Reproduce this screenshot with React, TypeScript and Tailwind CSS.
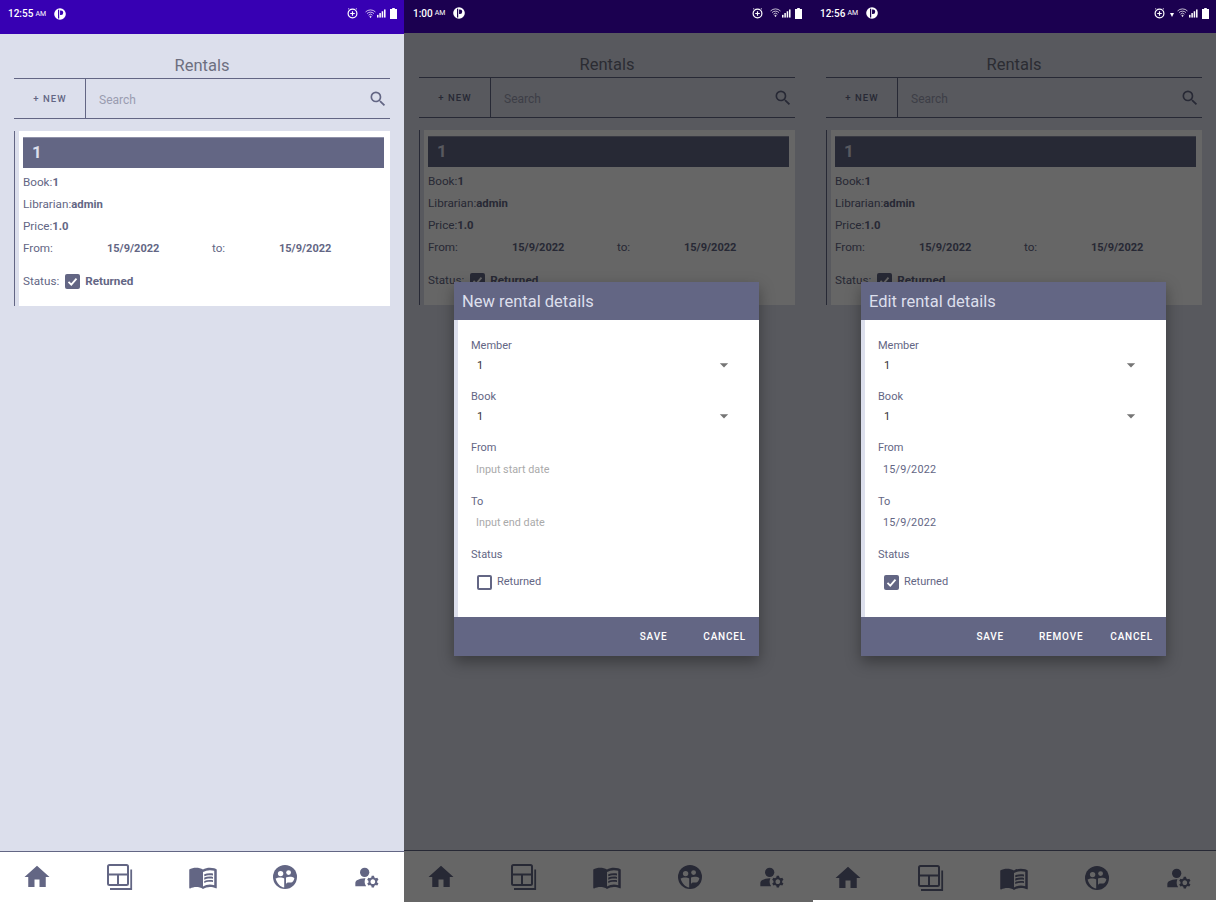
import { ReactNode } from 'react';
import { MdArrowDropDown, MdHome, MdManageAccounts, MdMenuBook, MdSearch } from 'react-icons/md';

const ink = 'text-[#636684]';

const PIcon = ({ color }: { color: string }) => (
  <svg width="12" height="12" viewBox="0 0 13 13">
    <circle cx="6.5" cy="6.5" r="6.3" fill="white" />
    <path d="M5 2v9.4" stroke={color} strokeWidth="1.3" />
    <path d="M6.6 2.8h1a2.4 2.4 0 0 1 0 4.8h-1z" fill={color} />
  </svg>
);

const StatusIcons = ({ arrow }: { arrow?: boolean }) => (
  <div className="flex items-center">
    <svg width="11" height="11" viewBox="0 0 11 11" fill="none" stroke="white">
      <circle cx="5.5" cy="5.5" r="4.4" strokeWidth="1.2" />
      <path d="M5.5 3.2v4.6M3.2 5.5h4.6" strokeWidth="1.2" />
      <path d="M1 1.2l1.2-.8M10 1.2l-1.2-.8" strokeWidth="0.8" />
    </svg>
    {arrow ? (
      <svg className="ml-1 mr-[2px]" width="6" height="11" viewBox="0 0 6 11">
        <path d="M1 5h4L3 9z" fill="white" />
      </svg>
    ) : (
      <div className="w-[7px]" />
    )}
    <svg width="11" height="10" viewBox="0 0 12 10" fill="none" stroke="white" strokeWidth="0.8">
      <path d="M.6 2.8a7.6 7.6 0 0 1 10.8 0" />
      <path d="M2.2 4.6a5.3 5.3 0 0 1 7.6 0" />
      <path d="M3.8 6.3a3 3 0 0 1 4.4 0" />
      <path d="M5.2 7.9a1.2 1.2 0 0 1 1.6 0L6 8.9z" fill="white" />
    </svg>
    <svg className="ml-px" width="9" height="9" viewBox="0 0 10 9" fill="white">
      <rect x="0" y="6" width="1.7" height="3" />
      <rect x="2.6" y="4" width="1.7" height="5" />
      <rect x="5.2" y="2" width="1.7" height="7" />
      <rect x="7.8" y="0" width="1.7" height="9" />
    </svg>
    <svg className="ml-1" width="7" height="11" viewBox="0 0 7 11" fill="white">
      <path d="M2.2 0h2.6v1H7v10H0V1h2.2z" />
    </svg>
  </div>
);

const MosaicIcon = () => (
  <svg className="-ml-px mr-px" width="28" height="28" viewBox="0 0 28 28" fill="none" stroke="#636684" strokeWidth="2">
    <rect x="3" y="2" width="20" height="20" rx="1.5" />
    <path d="M3 11.5h20M13 11.5V22" />
    <path d="M5 26h21.2V6.5" strokeWidth="1.8" />
  </svg>
);

const GroupCircleIcon = () => (
  <svg width="28" height="28" viewBox="0 0 28 28">
    <circle cx="14" cy="14" r="12" fill="#636684" />
    <circle cx="9.6" cy="10.6" r="2.7" fill="white" />
    <circle cx="17.6" cy="9.6" r="2.4" fill="white" />
    <path d="M4.6 15.6c1.8-1.4 6.4-1.7 8.6-.2v9.2c-4-.5-7.4-4.4-8.6-9z" fill="white" />
    <path d="M15 14.6c2.5-1.2 6.4-1 8.4.6-.6 2.6-1.8 4.2-3.4 4.2h-3c-1.4 0-2 1-2 2.4z" fill="white" />
  </svg>
);

const Checkbox = ({ checked }: { checked: boolean }) =>
  checked ? (
    <div className="flex h-[15px] w-[15px] items-center justify-center rounded-[2px] bg-[#636684]">
      <svg width="11" height="11" viewBox="0 0 11 11" fill="none" stroke="white" strokeWidth="1.8">
        <path d="M1.5 5.8l2.8 2.8 5.2-6" />
      </svg>
    </div>
  ) : (
    <div className="h-[15px] w-[15px] rounded-[2px] border-2 border-[#636684]" />
  );

const Line = ({ label, value }: { label: string; value: string }) => (
  <div className="flex h-[22px] items-center text-[11.7px]">
    {label}:<b className="text-[11.3px] font-bold">{value}</b>
  </div>
);

const Rentals = () => (
  <div className={`flex flex-col ${ink}`}>
    <div className="pt-[22px] text-center text-[16.5px] leading-[20px] text-[#6d6f80]">Rentals</div>
    <div className="mt-[2px] flex h-[41px] border-y border-[#636684]">
      <div className="flex w-[72px] items-center justify-center border-r border-[#636684] pl-px pt-px text-[9.5px] font-medium tracking-[1.1px]">
        + NEW
      </div>
      <div className="flex flex-1 items-center justify-between pl-[13px] pr-[2px]">
        <span className="mt-[2px] text-xs text-[#9a9cb0]">Search</span>
        <MdSearch size={20} />
      </div>
    </div>
    <div className="mt-3 h-[175px] border-l border-[#636684] pl-1">
      <div className="h-full bg-white px-1 pr-[6px] pt-[6px]">
        <div className="flex h-[31px] items-center border-t border-[#8f91a8] bg-[#636684] pl-[9px] text-[17px] font-bold text-[#dcdfec]">1</div>
        <div className="pt-1">
          <Line label="Book" value="1" />
          <Line label="Librarian" value="admin" />
          <Line label="Price" value="1.0" />
          <div className="flex h-[22px] items-center text-[11.7px]">
            <span className="w-[84px]">From:</span>
            <b className="w-[105px] text-[11px] font-bold">15/9/2022</b>
            <span className="w-[67px]">to:</span>
            <b className="text-[11px] font-bold">15/9/2022</b>
          </div>
          <div className="mt-[11px] flex h-[22px] items-center text-[11.7px]">
            <span>Status:</span>
            <div className="-mt-px ml-[6px]">
              <Checkbox checked />
            </div>
            <b className="ml-[5px] font-bold">Returned</b>
          </div>
        </div>
      </div>
    </div>
  </div>
);

const BottomNav = ({ className }: { className: string }) => (
  <div className={`flex shrink-0 items-center justify-between border-t border-[#636684] bg-white text-[#636684] ${className}`}>
    <MdHome size={30} />
    <MosaicIcon />
    <MdMenuBook size={30} />
    <GroupCircleIcon />
    <MdManageAccounts size={28} />
  </div>
);

const Select = ({ label }: { label: string }) => (
  <div className="h-[51px]">
    <div className="text-[11px] leading-[14px]">{label}</div>
    <div className="mt-[6px] flex h-[14px] items-center justify-between pl-[6px] pr-[25px] text-[11px] text-[#333]">
      <span>1</span>
      <span className="-mt-[3px] text-[#757575]">
        <MdArrowDropDown size={20} />
      </span>
    </div>
  </div>
);

const DateField = ({ label, value, hint, gapClass }: { label: string; value?: string; hint: string; gapClass: string }) => (
  <div className="h-[53.5px]">
    <div className="text-[11px] leading-[14px]">{label}</div>
    <div className={`pl-[5px] text-[10.8px] leading-[14px] ${gapClass} ${value ? 'tracking-[0.2px] text-[#636684]' : 'text-[#aaa]'}`}>
      {value ?? hint}
    </div>
  </div>
);

const RentalDialog = ({ title, edit }: { title: string; edit?: boolean }) => (
  <div className="h-[374px] w-[305px] overflow-hidden shadow-[0_6px_14px_rgba(0,0,0,0.35)]">
    <div className="flex h-[38px] items-center bg-[#636684] pl-2 pt-[3px] text-[16.5px] text-[#dcdfec]">{title}</div>
    <div className={`h-[297px] border-l-4 border-[#dcdfec] bg-white pl-[13px] pt-[19px] ${ink}`}>
      <Select label="Member" />
      <Select label="Book" />
      <DateField label="From" hint="Input start date" gapClass="mt-2" value={edit ? '15/9/2022' : undefined} />
      <DateField label="To" hint="Input end date" gapClass="mt-[7px]" value={edit ? '15/9/2022' : undefined} />
      <div className="text-[11px] leading-[14px]">Status</div>
      <div className="mt-3 flex items-center pl-[6px] text-[11px]">
        <Checkbox checked={!!edit} />
        <span className="ml-[5px]">Returned</span>
      </div>
    </div>
    <div className="flex h-[39px] items-center justify-end bg-[#636684] pr-[13px] text-[10px] font-medium tracking-[0.8px] text-white">
      <span>SAVE</span>
      {edit && <span className="ml-[35px]">REMOVE</span>}
      <span className={edit ? 'ml-[27px]' : 'ml-9'}>CANCEL</span>
    </div>
  </div>
);

type ScreenProps = {
  time: string;
  statusClass: string;
  contentClass: string;
  navClass: string;
  overlayClass?: string;
  widthClass: string;
  arrow?: boolean;
  children?: ReactNode;
};

const Screen = ({ time, statusClass, contentClass, navClass, overlayClass, widthClass, arrow, children }: ScreenProps) => (
  <div className={`relative flex shrink-0 flex-col overflow-hidden bg-[#dcdfec] font-['Roboto',sans-serif] ${widthClass}`}>
    <div className={`flex shrink-0 items-center justify-between pb-[9px] pt-[2px] text-white ${statusClass}`}>
      <div className="flex items-center">
        <span className="text-[10px] font-medium">{time}</span>
        <span className="ml-[2px] mt-px text-[7px]">AM</span>
        <span className="ml-2">
          <PIcon color={children ? '#1b0050' : '#3700b3'} />
        </span>
      </div>
      <StatusIcons arrow={arrow} />
    </div>
    <div className={`flex-1 ${contentClass}`}>
      <Rentals />
    </div>
    <BottomNav className={navClass} />
    {children && (
      <div className={`absolute inset-x-0 bottom-0 top-[33px] flex justify-center bg-black/60 pt-[249px] ${overlayClass ?? ''}`}>
        {children}
      </div>
    )}
  </div>
);

const App = () => (
  <div className="flex h-[902px] w-[1220px] items-start overflow-hidden bg-white">
    <Screen
      time="12:55"
      widthClass="h-[902px] w-[404px]"
      statusClass="h-[34px] bg-[#3700b3] pl-2 pr-[7px]"
      contentClass="px-[14px]"
      navClass="h-[51px] pl-[22px] pr-[23px]"
    />
    <Screen
      time="1:00"
      widthClass="h-[902px] w-[409px]"
      statusClass="h-[33px] bg-[#1b0050] pl-[9px] pr-[11px]"
      contentClass="pl-[15px] pr-[18px]"
      navClass="h-[52px] pl-[22px] pr-[27px]"
      overlayClass="pr-1"
    >
      <RentalDialog title="New rental details" />
    </Screen>
    <Screen
      time="12:56"
      widthClass="h-[900px] w-[403px]"
      statusClass="h-[33px] bg-[#1b0050] pl-[7px] pr-[7px]"
      contentClass="pl-[13px] pr-[14px]"
      navClass="h-[50px] pl-[20px] pr-[23px] pt-1"
      overlayClass="pr-[2px]"
      arrow
    >
      <RentalDialog title="Edit rental details" edit />
    </Screen>
  </div>
);

export default App;
